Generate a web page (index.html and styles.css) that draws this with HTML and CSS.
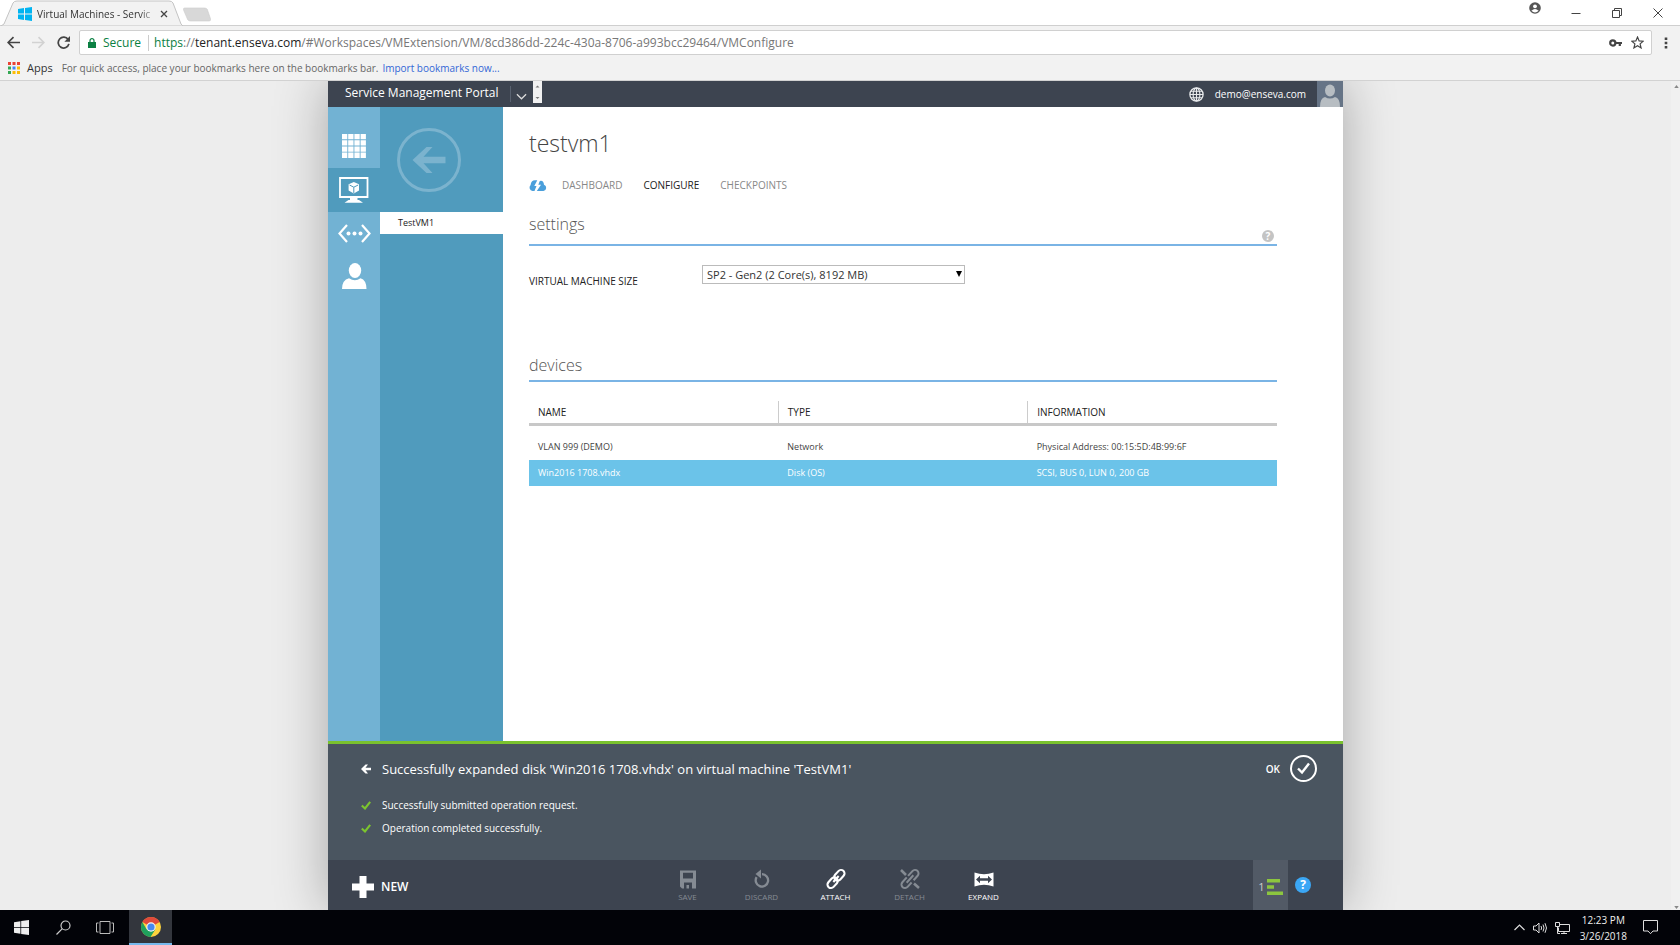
FILE: index.html
```html
<!DOCTYPE html>
<html lang="en">
<head>
<meta charset="utf-8">
<title>Virtual Machines - Service Management Portal</title>
<link rel="stylesheet" href="styles.css">
</head>
<body>
<header class="browser">
  <div class="tabstrip">
    <div class="tab">
      <svg class="tab-shape" viewBox="0 0 183 26" preserveAspectRatio="none" aria-hidden="true"><path d="M1 26 L4 24 L13 3 Q14 1 17 1 H169 Q172 1 173 3 L181 24 L183 26 Z" fill="#f2f2f2" stroke="#c4c4c4"/></svg>
      <svg class="tab-icon" viewBox="0 0 14 14" aria-hidden="true"><path d="M0 2 L6 1.100 V6.500 H0 Z M7 1 L14 0 V6.500 H7 Z M0 7.500 H6 V12.900 L0 12 Z M7 7.500 H14 V14 L7 13 Z" fill="#00b4f1"/></svg>
      <span class="tab-title">Virtual Machines - Servic</span>
      <button class="tab-close" aria-label="Close tab"><svg viewBox="0 0 8 8"><path d="M1 1 L7 7 M7 1 L1 7" stroke="#444" stroke-width="1.300"/></svg></button>
    </div>
    <button class="new-tab" aria-label="New tab"><svg viewBox="0 0 30 15"><path d="M2 .500 H23 Q25 .500 26 2 L29.500 12 Q30 14.500 28 14.500 H8 Q6 14.500 5 13 L.500 2.500 Q0 .500 2 .500 Z" fill="#d8d8d8" stroke="#cbcbcb" stroke-width=".600"/></svg></button>
    <div class="window-buttons">
      <button class="account" aria-label="Account"><svg viewBox="0 0 12 12"><circle cx="6" cy="6" r="5.800" fill="#555"/><circle cx="6" cy="4.300" r="1.900" fill="#fff"/><path d="M2.400 8.800 Q6 5.300 9.600 8.800 Q6 12 2.400 8.800Z" fill="#fff"/></svg></button>
      <button aria-label="Minimize"><svg viewBox="0 0 10 10"><path d="M.500 5.500 H9.500" stroke="#444"/></svg></button>
      <button aria-label="Restore"><svg viewBox="0 0 10 10"><path d="M.500 2.500 H7.500 V9.500 H.500 Z M2.500 2.500 V.500 H9.500 V7.500 H7.500" fill="none" stroke="#444"/></svg></button>
      <button aria-label="Close"><svg viewBox="0 0 10 10"><path d="M.500 .500 L9.500 9.500 M9.500 .500 L.500 9.500" stroke="#444"/></svg></button>
    </div>
  </div>
  <div class="toolbar">
    <button class="tool" aria-label="Back"><svg viewBox="0 0 12 12"><path d="M12 6 H1 M6 1 L1 6 L6 11" fill="none" stroke="#444" stroke-width="1.500"/></svg></button>
    <button class="tool" aria-label="Forward"><svg viewBox="0 0 12 12"><path d="M0 6 H11 M6 1 L11 6 L6 11" fill="none" stroke="#d2d2d2" stroke-width="1.500"/></svg></button>
    <button class="tool" aria-label="Reload"><svg viewBox="0 0 12 12"><path d="M10.300 3.300 A5 5 0 1 0 11 7.300" fill="none" stroke="#444" stroke-width="1.600"/><path d="M12 0 V5.200 H6.800 Z" fill="#444"/></svg></button>
    <div class="omnibox">
      <svg class="lock" viewBox="0 0 8 10" aria-hidden="true"><path d="M0 4 H8 V10 H0 Z" fill="#0b8043"/><path d="M2 4.500 V2.700 A2 2 0 0 1 6 2.700 V4.500" fill="none" stroke="#0b8043" stroke-width="1.200"/></svg>
      <span class="secure">Secure</span>
      <span class="url"><span class="scheme">https</span>://<span class="host">tenant.enseva.com</span>/#Workspaces/VMExtension/VM/8cd386dd-224c-430a-8706-a993bcc29464/VMConfigure</span>
      <button class="tool key" aria-label="Saved passwords"><svg viewBox="0 0 13 8"><circle cx="3.800" cy="4" r="2.600" fill="none" stroke="#444" stroke-width="2.200"/><path d="M6.500 4 H13 M10.800 4 V7" fill="none" stroke="#444" stroke-width="2.200"/></svg></button>
      <button class="tool" aria-label="Bookmark"><svg viewBox="0 0 12 12"><path d="M6 1 L7.500 4.500 L11.300 4.800 L8.400 7.300 L9.300 11 L6 9 L2.700 11 L3.600 7.300 L.700 4.800 L4.500 4.500 Z" fill="none" stroke="#444" stroke-width="1.100"/></svg></button>
    </div>
    <button class="tool menu" aria-label="Menu"><svg viewBox="0 0 4 12"><path d="M.700 .500h2.600v2.600H.700z M.700 4.700h2.600v2.600H.700z M.700 8.900h2.600v2.600H.700z" fill="#444"/></svg></button>
  </div>
  <div class="bookmarks">
    <svg class="apps" viewBox="0 0 12 12" aria-hidden="true"><path fill="#ea4335" d="M0 0h3v3H0zM4.500 0h3v3h-3zM9 0h3v3H9z"/><path fill="#34a853" d="M0 4.500h3v3H0zM0 9h3v3H0z"/><path fill="#4285f4" d="M4.500 4.500h3v3h-3z"/><path fill="#fbbc05" d="M9 4.500h3v3H9zM4.500 9h3v3h-3zM9 9h3v3H9z"/></svg>
    <a class="apps-link" href="#apps">Apps</a>
    <span>For quick access, place your bookmarks here on the bookmarks bar.</span>
    <a class="import" href="#import">Import bookmarks now...</a>
  </div>
</header>

<div class="viewport">
  <div class="page">
    <div class="portal">
      <div class="topbar">
        <span class="brand">Service Management Portal</span>
        <button class="brand-menu" aria-label="Portal menu"><svg viewBox="0 0 12 7"><path d="M1 1 L6 6 L11 1" fill="none" stroke="#ddd" stroke-width="1.300"/></svg></button>
        <span class="spinner"><svg viewBox="0 0 9 22"><path d="M2.500 6.500 L4.500 4.500 L6.500 6.500Z M2.500 16 L4.500 18 L6.500 16Z" fill="#777"/></svg></span>
        <svg class="globe" viewBox="0 0 15 15" aria-hidden="true"><circle cx="7.500" cy="7.500" r="6.600" fill="#3d4450" stroke="#e8eaec" stroke-width="1.300"/><path d="M7.500 1 V14 M1 7.500 H14 M2 4.300 H13 M2 10.700 H13" stroke="#e8eaec" stroke-width="1.100"/><ellipse cx="7.500" cy="7.500" rx="3.400" ry="6.500" fill="none" stroke="#e8eaec" stroke-width="1.100"/></svg>
        <a class="user" href="#account">demo@enseva.com</a>
        <svg class="avatar" viewBox="0 0 26 26" aria-hidden="true"><path fill="#667486" d="M0 0h26v26H0z"/><ellipse cx="13" cy="9.500" rx="5" ry="6" fill="#b7bdc2"/><path d="M3 26 Q3 17 8 16 Q13 19 18 16 Q23 17 23 26Z" fill="#b7bdc2"/></svg>
      </div>
      <div class="body">
        <nav class="rail" aria-label="Services">
          <button aria-label="All items"><svg width="24" height="24" viewBox="0 0 24 24"><path fill="#fff" d="M0 0h5.300v5.300H0zM6.200 0h5.300v5.300H6.200zM12.400 0h5.300v5.300h-5.300zM18.600 0h5.300v5.300h-5.300zM0 6.200h5.300v5.300H0zM6.200 6.200h5.300v5.300H6.200zM12.400 6.200h5.300v5.300h-5.300zM18.600 6.200h5.300v5.300h-5.300zM0 12.400h5.300v5.300H0zM6.200 12.400h5.300v5.300H6.200zM12.400 12.400h5.300v5.300h-5.300zM18.600 12.400h5.300v5.300h-5.300zM0 18.600h5.300v5.300H0zM6.200 18.600h5.300v5.300H6.200zM12.400 18.600h5.300v5.300h-5.300zM18.600 18.600h5.300v5.300h-5.300z"/></svg></button>
          <button class="active" aria-label="Virtual machines"><svg width="30" height="26" viewBox="0 0 30 26"><path d="M1 1 H28.500 V20 H1 Z" fill="none" stroke="#fff" stroke-width="1.800"/><path d="M11 20.500 H18.500 V23 H20 L24 25.800 H5.500 L9.500 23 H11Z" fill="#fff"/><path d="M14.800 5 L20 7.300 V13.600 L14.800 16.600 L9.600 13.600 V7.300Z" fill="#fff"/><path d="M10.500 8 L14.800 10.200 L19.200 8 M14.800 10.200 V16" fill="none" stroke="#509bbd"/></svg></button>
          <button class="networks" aria-label="Networks"><svg width="33" height="19" viewBox="0 0 33 19"><path d="M9 1 L1.500 9.500 L9 18 M24 1 L31.500 9.500 L24 18" fill="none" stroke="#fff" stroke-width="2.200"/><circle cx="10.500" cy="9.500" r="2" fill="#fff"/><circle cx="16.500" cy="9.500" r="2" fill="#fff"/><circle cx="22.500" cy="9.500" r="2" fill="#fff"/></svg></button>
          <button aria-label="My account"><svg width="25" height="26" viewBox="0 0 25 26"><ellipse cx="13" cy="7.500" rx="6.200" ry="7.500" fill="#fff"/><path d="M0 26 Q0 17 7 15.200 Q13 19.500 18.500 15.200 Q24.500 17 24.500 26Z" fill="#fff"/></svg></button>
        </nav>
        <div class="subnav">
          <button class="back" aria-label="Back"><svg viewBox="0 0 64 64"><circle cx="32" cy="32" r="30.500" fill="none" stroke="#7bb3ce" stroke-width="3"/><path d="M15.500 32 L29.500 19 H35.500 L26.500 28.800 H48.500 V35.200 H26.500 L35.500 45 H29.500 Z" fill="#7bb3ce"/></svg></button>
          <a class="vm-link" href="#testvm1">TestVM1</a>
        </div>
        <main class="main">
          <h1>testvm1</h1>
          <nav class="tabs" aria-label="Virtual machine">
            <a href="#quick" aria-label="Quick start"><svg class="cloud" viewBox="0 0 18 11"><path d="M3.500 11 A3.500 3.500 0 0 1 1.600 5 Q2 .500 6 .300 L8.300 .300 L5.300 6 H7.500 L5.500 11Z" fill="#4a9fdb"/><path d="M10.800 1 Q14.500 0 15 4.800 A3.200 3.200 0 0 1 14.500 11 H7.800 L12 4.800 H9.300Z" fill="#4a9fdb"/></svg></a>
            <a href="#dashboard">DASHBOARD</a>
            <a class="current" href="#configure" aria-current="page">CONFIGURE</a>
            <a href="#checkpoints">CHECKPOINTS</a>
          </nav>
          <section class="settings">
            <div class="section-head">
              <h2>settings</h2>
              <button class="hint" aria-label="Help">?</button>
            </div>
            <div class="field">
              <label for="vm-size">VIRTUAL MACHINE SIZE</label>
              <span class="select-box">
                <select id="vm-size"><option>SP2 - Gen2 (2 Core(s), 8192 MB)</option></select>
                <svg class="caret" viewBox="0 0 6 6" aria-hidden="true"><path d="M0 0H6L3 6Z" fill="#000"/></svg>
              </span>
            </div>
          </section>
          <section class="devices">
            <div class="section-head"><h2>devices</h2></div>
            <table>
              <thead><tr><th scope="col">NAME</th><th scope="col">TYPE</th><th scope="col">INFORMATION</th></tr></thead>
              <tbody>
                <tr><td>VLAN 999 (DEMO)</td><td>Network</td><td>Physical Address: 00:15:5D:4B:99:6F</td></tr>
                <tr class="selected"><td>Win2016 1708.vhdx</td><td>Disk (OS)</td><td>SCSI, BUS 0, LUN 0, 200 GB</td></tr>
              </tbody>
            </table>
          </section>
        </main>
      </div>
      <section class="notice" aria-label="Notification">
        <div class="notice-head">
          <svg class="notice-arrow" viewBox="0 0 10 10" aria-hidden="true"><path d="M0 5 L4.500 .500 H7 L4.500 3.800 H10 V6.200 H4.500 L7 9.500 H4.500Z" fill="#fff"/></svg>
          <p class="notice-title">Successfully expanded disk 'Win2016 1708.vhdx' on virtual machine 'TestVM1'</p>
          <button class="ok">OK <svg viewBox="0 0 27 27"><circle cx="13.500" cy="13.500" r="12.500" fill="none" stroke="#fff" stroke-width="2"/><path d="M8 13.500 L12 17.500 L19 8.500" fill="none" stroke="#fff" stroke-width="2.400"/></svg></button>
        </div>
        <ul class="steps">
          <li><svg viewBox="0 0 10 9"><path d="M.800 4.500 L4 7.500 L9.200 .800" fill="none" stroke="#7cc52e" stroke-width="2.100"/></svg>Successfully submitted operation request.</li>
          <li><svg viewBox="0 0 10 9"><path d="M.800 4.500 L4 7.500 L9.200 .800" fill="none" stroke="#7cc52e" stroke-width="2.100"/></svg>Operation completed successfully.</li>
        </ul>
      </section>
      <footer class="commands">
        <button class="new"><svg viewBox="0 0 22 22"><path d="M7.500 0h7v7.500H22v7h-7.500V22h-7v-7.500H0v-7h7.500z" fill="#fff"/></svg>NEW</button>
        <div class="actions">
          <button disabled><svg viewBox="0 0 22 22"><path d="M3 2.500 H19 V20.500 H5 L3 18.500Z M6 4.800 V10.500 H16 V4.800Z M7 14.500 V20.500 H9.500 V17 H12 V20.500 H15 V14.500Z" fill="currentColor" fill-rule="evenodd"/></svg>SAVE</button>
          <button disabled><svg viewBox="0 0 22 22"><path d="M5.600 9.200 A6.200 6.200 0 1 0 11 6.200" fill="none" stroke="currentColor" stroke-width="2.300"/><path d="M10 1.500 V10.500 L4.500 6Z" fill="currentColor"/></svg>DISCARD</button>
          <button><svg viewBox="0 0 22 22"><g fill="none" stroke="currentColor" stroke-width="2.100" transform="rotate(-48 11 11)"><rect x="10" y="7.500" width="12" height="7" rx="3.500"/><rect x="0" y="7.500" width="12" height="7" rx="3.500"/><path d="M7 11H15"/></g></svg>ATTACH</button>
          <button disabled><svg viewBox="0 0 22 22"><g fill="none" stroke="currentColor" stroke-width="2" transform="rotate(-48 11 11)"><path d="M9.500 14.500 H3.500 A3.500 3.500 0 0 1 3.500 7.500 H10 M12 7.500 H18.500 A3.500 3.500 0 0 1 18.500 14.500 H12.500 M6 11 H16"/></g><path d="M2 2 L7 7 M15 15.500 L20 20" stroke="currentColor" stroke-width="2.600"/></svg>DETACH</button>
          <button><svg viewBox="0 0 22 22"><path d="M1.500 4.500 Q11 8 20.500 4.500 V18.500 Q11 15 1.500 18.500Z" fill="currentColor"/><path d="M3 11.500 L7 7.800 V10.300 H15 V7.800 L19 11.500 L15 15.200 V12.700 H7 V15.200Z" fill="#3d4450"/></svg>EXPAND</button>
        </div>
        <div class="status">
          <button class="ops" aria-label="1 notification"><span>1</span><svg viewBox="0 0 16 16"><path d="M0 0h13v3.500H0zM0 6.200h7v3.500H0zM0 12.500h16V16H0z" fill="#8cc63f"/></svg></button>
          <button class="help" aria-label="Help">?</button>
        </div>
      </footer>
    </div>
  </div>
  <div class="scrollbar" aria-hidden="true"><svg viewBox="0 0 6 4"><path d="M0 4 L3 0 L6 4Z" fill="#888"/></svg><svg viewBox="0 0 6 4"><path d="M0 0 L3 4 L6 0Z" fill="#888"/></svg></div>
</div>

<footer class="taskbar">
  <button aria-label="Start"><svg width="15" height="15" viewBox="0 0 14 14"><path d="M0 2 L6 1.100 V6.500 H0 Z M6.700 1 L14 0 V6.500 H6.700 Z M0 7.300 H6 V12.900 L0 12 Z M6.700 7.300 H14 V14 L6.700 13 Z" fill="#eee"/></svg></button>
  <button aria-label="Search"><svg width="15" height="15" viewBox="0 0 15 15"><circle cx="9.500" cy="5.500" r="4.500" fill="none" stroke="#ccc" stroke-width="1.200"/><path d="M6.300 8.700 L.500 14.500" stroke="#ccc" stroke-width="1.200"/></svg></button>
  <button aria-label="Task view"><svg width="18" height="13" viewBox="0 0 18 13"><path d="M4 .500 H14 V12.500 H4Z M2.500 2 H.500 V11 H2.500 M15.500 2 H17.500 V11 H15.500" fill="none" stroke="#bbb"/></svg></button>
  <button class="running" aria-label="Chrome"><svg width="20" height="20" viewBox="0 0 20 20"><circle cx="10" cy="10" r="10" fill="#fdd23e"/><path d="M10 10 L1.340 5 A10 10 0 0 1 18.660 5Z M10 5 H18.660 L10 10Z" fill="#e04a3b"/><path d="M1.340 5 A10 10 0 0 0 9.500 20 L14.300 12.500 L10 10 L5.670 12.500Z" fill="#1fa15d"/><circle cx="10" cy="10" r="4.700" fill="#f4f4f4"/><circle cx="10" cy="10" r="3.600" fill="#4688f1"/></svg></button>
  <div class="tray">
    <button aria-label="Show hidden icons"><svg width="11" height="7" viewBox="0 0 11 7"><path d="M.500 6 L5.500 1 L10.500 6" fill="none" stroke="#ddd" stroke-width="1.200"/></svg></button>
    <button aria-label="Volume"><svg width="14" height="12" viewBox="0 0 14 12"><path d="M.500 4 H3 L6 1 V11 L3 8 H.500Z M8 4 Q9.300 6 8 8 M10 2.500 Q12 6 10 9.500 M12 1.200 Q15 6 12 10.800" fill="none" stroke="#ddd"/></svg></button>
    <button aria-label="Network"><svg width="15" height="12" viewBox="0 0 15 12"><path d="M5 2.500 H14.500 V9.500 H3.500 V5.500 M6 11.500 H12 M9 9.500 V11.500 M.500 .500 H4.500 V4.500 H.500Z M2.500 4.500 V11.500 H5" fill="none" stroke="#ddd"/></svg></button>
    <div class="clock"><span>12:23 PM</span><span>3/26/2018</span></div>
    <button aria-label="Notifications"><svg width="15" height="15" viewBox="0 0 15 15"><path d="M.500 .500 H14.500 V11 H10 L7.500 13.700 L5 11 H.500Z" fill="none" stroke="#ddd"/></svg></button>
  </div>
</footer>
</body>
</html>
```
FILE: styles.css
```css
* { box-sizing: border-box; }

body {
  margin: 0;
  height: 100vh;
  display: flex;
  flex-direction: column;
  font: 11px/16px "Open Sans", "Noto Sans", sans-serif;
  color: #444;
  background: #ededed;
}

button {
  padding: 0;
  border: 0;
  background: none;
  font: inherit;
  color: inherit;
  display: flex;
  align-items: center;
  justify-content: center;
}

a { color: inherit; text-decoration: none; }
svg { display: block; flex: none; }
h1, h2, p, ul { margin: 0; padding: 0; font-weight: 300; }

/* Browser chrome */
.browser { background: #f2f2f2; border-bottom: 1px solid #d2d2d2; }

.tabstrip {
  display: flex;
  height: 26px;
  background: #fff;
  border-bottom: 1px solid #cfcfcf;
}
.tab {
  position: relative;
  display: flex;
  align-items: center;
  width: 183px;
  height: 26px;
  padding: 2px 15px 0 18px;
}
.tab-shape { position: absolute; inset: 0; width: 100%; height: 100%; }
.tab-icon { position: relative; width: 14px; height: 14px; }
.tab-title {
  position: relative;
  flex: 1;
  margin: 0 2px 0 5px;
  white-space: nowrap;
  font-size: 10px;
  color: #333;
  mask-image: linear-gradient(to right, #000 85%, transparent);
}
.tab-close { position: relative; }
.tab-close svg { width: 8px; height: 8px; }
.new-tab { align-self: flex-end; margin-bottom: 3px; }
.new-tab svg { width: 28px; height: 15px; }
.window-buttons { display: flex; margin-left: auto; padding-right: 2px; }
.window-buttons button { width: 41px; height: 25px; }
.window-buttons svg { width: 10px; height: 10px; }
.window-buttons .account { height: 16px; }
.window-buttons .account svg { width: 12px; height: 12px; }

.toolbar {
  display: flex;
  align-items: center;
  gap: 12px;
  height: 33px;
  padding: 0 12px 0 7px;
}
.tool svg { width: 13px; height: 13px; }
.omnibox {
  flex: 1;
  display: flex;
  align-items: center;
  height: 25px;
  margin-left: -3px;
  padding: 0 7px 0 8px;
  border: 1px solid #d0d0d0;
  border-radius: 2px;
  background: #fff;
  font-size: 12px;
}
.lock { width: 8px; height: 10px; }
.secure {
  margin-left: 7px;
  padding-right: 7px;
  border-right: 1px solid #ccc;
  color: #0b8043;
}
.url { flex: 1; padding-left: 5px; color: #777; white-space: nowrap; }
.scheme { color: #0b8043; }
.host { color: #222; }
.key { margin-right: 9px; }
.key svg { height: 8px; }
.menu svg { width: 4px; height: 12px; }

.bookmarks {
  display: flex;
  align-items: center;
  height: 21px;
  padding: 0 8px 3px;
  color: #666;
  font-size: 10px;
}
.apps { width: 12px; height: 12px; }
.apps-link { margin: 0 9px 0 7px; color: #333; font-size: 11px; }
.import { margin-left: 4px; color: #3367d6; }

/* Page */
.viewport { flex: 1; display: flex; min-height: 0; overflow: hidden; }
.page { flex: 1; display: flex; justify-content: center; overflow: hidden; }
.scrollbar {
  display: flex;
  flex-direction: column;
  justify-content: space-between;
  align-items: flex-end;
  width: 9px;
  padding: 4px 1px 1px;
  background: #f0f0f0;
}
.scrollbar svg { width: 5px; height: 3px; }

.portal {
  flex: 1;
  max-width: 1015px;
  display: flex;
  flex-direction: column;
  box-shadow: 0 0 50px rgba(0, 0, 0, .3);
}

.topbar {
  display: flex;
  align-items: center;
  height: 26px;
  padding-left: 17px;
  background: #3d4450;
  color: #fff;
}
.brand { padding-bottom: 2px; font-size: 12px; }
.brand-menu {
  width: 22px;
  height: 16px;
  margin-left: 11px;
  padding-top: 4px;
  border-left: 1px solid #596270;
}
.brand-menu svg { width: 11px; height: 7px; }
.spinner { align-self: flex-start; margin-left: 1px; background: #f1f1f1; }
.spinner svg { width: 9px; height: 22px; }
.globe { width: 15px; height: 15px; margin: 0 11px 0 auto; }
.user { margin-right: 11px; font-size: 10px; }
.avatar { width: 26px; height: 26px; }

.body { flex: 1; display: flex; min-height: 0; background: #fff; }

.rail { width: 52px; padding-top: 17px; background: #72b2d3; }
.rail button { width: 100%; height: 44px; }
.rail .active { background: #509bbd; }
.rail .networks { height: 42px; }

.subnav { width: 123px; background: #509bbd; }
.back { width: 64px; height: 64px; margin: 21px 17px 20px; }
.back svg { width: 64px; height: 64px; }
.vm-link {
  display: block;
  padding: 0 18px;
  background: #fff;
  color: #222;
  font-size: 9px;
  line-height: 22px;
}

.main { flex: 1; min-width: 0; padding: 19px 66px 0 26px; }
h1 { font-size: 23px; line-height: 34px; color: #444; }
.tabs {
  display: flex;
  align-items: center;
  gap: 21px;
  margin-top: 17px;
  color: #888;
  font-size: 10px;
}
.tabs a:first-child { margin-right: -6px; }
.tabs .current { color: #222; }
.cloud { width: 18px; height: 11px; }

.section-head {
  display: flex;
  justify-content: space-between;
  align-items: flex-end;
  border-bottom: 2px solid #7ab4e5;
}
.settings .section-head { margin-top: 19px; padding-bottom: 8px; height: 34px; }
.settings .section-head .hint { margin: 0 3px -6px 0; }
h2 { font-size: 16px; line-height: 24px; color: #555; }
.hint {
  width: 12px;
  height: 12px;
  border-radius: 50%;
  background: #c4c4c4;
  color: #fff;
  font-weight: 700;
  font-size: 10px;
  line-height: 12px;
}
.field { display: flex; margin-top: 19px; }
.field label {
  width: 173px;
  padding-top: 8px;
  font-size: 10px;
  font-weight: 500;
  color: #222;
}
.select-box { position: relative; width: 263px; }
.select-box select {
  appearance: none;
  width: 100%;
  height: 19px;
  padding: 0 4px;
  border: 1px solid #bbb;
  border-radius: 0;
  background: #fff;
  color: #333;
  font: 11px/16px "Open Sans", "Noto Sans", sans-serif;
}
.caret { position: absolute; top: 6px; right: 3px; width: 6px; height: 6px; }

.devices { margin-top: 61px; }
.devices .section-head { height: 32px; padding-bottom: 3px; }

table { width: 100%; margin-top: 19px; border-collapse: collapse; table-layout: fixed; }
th, td { padding: 0 9px; text-align: left; }
th {
  height: 23px;
  border-bottom: 3px solid #c8c8c8;
  border-left: 1px solid #ccc;
  color: #222;
  font-size: 10px;
  font-weight: 500;
}
th:first-child { border-left: 0; }
td { height: 26px; font-size: 9px; }
tbody tr:first-child td { height: 36px; padding-top: 8px; }
.selected { background: #6bc3e9; color: #fff; }

/* Notification */
.notice {
  height: 119px;
  padding: 11px 26px 0 33px;
  border-top: 3px solid #7ac22e;
  background: #4a5560;
  color: #fff;
}
.notice-head { display: flex; align-items: center; height: 27px; }
.notice-arrow { width: 10px; height: 10px; margin-right: 11px; }
.notice-title { flex: 1; font-size: 13px; font-weight: 400; }
.ok { gap: 10px; font-size: 10px; font-weight: 600; }
.ok svg { width: 27px; height: 27px; }
.steps { margin-top: 12px; list-style: none; font-weight: 400; font-size: 10px; line-height: 23px; }
.steps li { display: flex; align-items: center; gap: 11px; }
.steps svg { width: 10px; height: 9px; }

/* Command bar */
.commands {
  display: grid;
  grid-template-columns: 1fr auto 1fr;
  height: 50px;
  background: #3d4450;
  color: #fff;
}
.new {
  justify-self: start;
  gap: 7px;
  padding: 3px 0 0 24px;
  font-size: 12px;
  font-weight: 600;
}
.new svg { width: 22px; height: 22px; }
.actions { display: flex; }
.actions button {
  flex-direction: column;
  gap: 1px;
  width: 74px;
  font-size: 8px;
  line-height: 12px;
}
.actions button:disabled { color: #858b93; }
.actions svg { width: 22px; height: 22px; }
.status { display: flex; justify-content: flex-end; align-items: center; padding-right: 32px; }
.ops {
  gap: 2px;
  width: 35px;
  height: 50px;
  margin-right: 7px;
  padding-top: 4px;
  background: #525a66;
  color: #ccc;
}
.ops svg { width: 16px; height: 16px; }
.help {
  width: 16px;
  height: 16px;
  border-radius: 50%;
  background: #3ba7f5;
  font-size: 12px;
  font-weight: 700;
}

/* Taskbar */
.taskbar { display: flex; height: 35px; background: #020308; color: #eee; }
.taskbar > button { width: 42px; }
.taskbar > .running { width: 43px; margin-left: 3px; background: #33363d; border-bottom: 2px solid #76b9ed; }
.tray { display: flex; align-items: center; gap: 8px; margin-left: auto; padding-right: 22px; }
.clock {
  display: flex;
  flex-direction: column;
  align-items: center;
  margin: 0 8px 0 2px;
  font-size: 10px;
}
```
